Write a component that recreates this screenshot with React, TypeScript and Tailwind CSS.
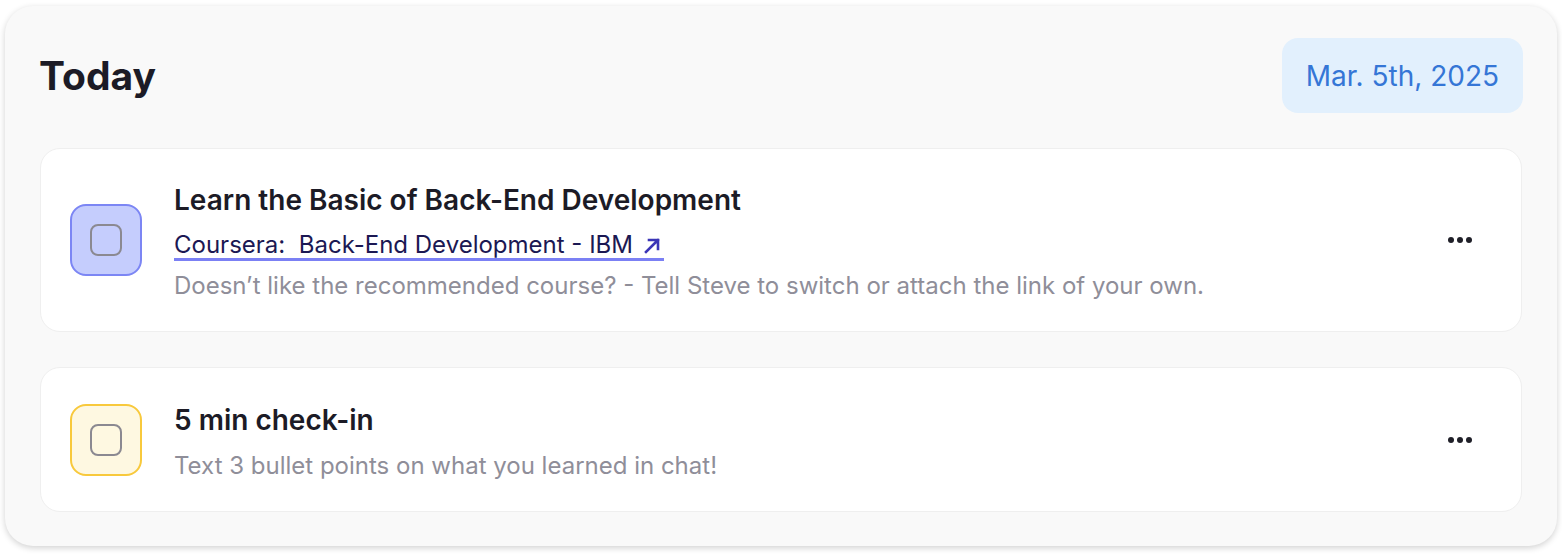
type Task = {
  title: string;
  link?: string;
  note: string;
  tone: "indigo" | "amber";
};

const tasks: Task[] = [
  {
    title: "Learn the Basic of Back-End Development",
    link: "Coursera:\u00a0 Back-End Development - IBM",
    note: "Doesn\u2019t like the recommended course? - Tell Steve to switch or attach the link of your own.",
    tone: "indigo",
  },
  {
    title: "5 min check-in",
    note: "Text 3 bullet points on what you learned in chat!",
    tone: "amber",
  },
];

function Dots() {
  return (
    <svg width="26" height="8" viewBox="0 0 26 8" className="shrink-0">
      <circle cx="4" cy="4" r="3" fill="#1f1f28" />
      <circle cx="13" cy="4" r="3" fill="#1f1f28" />
      <circle cx="22" cy="4" r="3" fill="#1f1f28" />
    </svg>
  );
}

function LinkArrow() {
  return (
    <svg width="17" height="17" viewBox="0 0 17 17" fill="none" className="shrink-0">
      <path d="M2 15 L14 3 M5 3 H14 V12" stroke="#3b35b6" strokeWidth="2.6" strokeLinecap="square" />
    </svg>
  );
}

function TaskCard({ task }: { task: Task }) {
  const box =
    task.tone === "indigo"
      ? "bg-[#c5cdfd] border-[#7c86f4]"
      : "bg-[#fef8e1] border-[#f8c93c]";

  return (
    <div className="flex items-center rounded-[20px] border border-[#efefef] bg-white px-[29px]">
      <div className={`flex h-[72px] w-[72px] shrink-0 items-center justify-center rounded-[16px] border-2 ${box}`}>
        <div className="h-[32px] w-[32px] rounded-[8px] border-2 border-[#8b8991]" />
      </div>
      <div className={`ml-[32px] flex flex-1 flex-col ${task.link ? "pb-[30px] pt-[35px]" : "pb-[30px] pt-[36px]"}`}>
        <div className="text-[28px] font-semibold leading-[32px] text-[#1c1b26]">{task.title}</div>
        {task.link && (
          <a className="mt-[16px] flex w-fit items-center gap-[11px] border-b-[3px] border-[#7b80f4] pr-[3px] text-[24px] leading-[26px] text-[#1b1853]">
            {task.link}
            <LinkArrow />
          </a>
        )}
        <div className={`${task.link ? "mt-[10px]" : "mt-[15px]"} text-[24px] leading-[30px] text-[#8f8e99]`}>{task.note}</div>
      </div>
      <div className="mr-[19px]">
        <Dots />
      </div>
    </div>
  );
}

export default function App() {
  return (
    <div className="min-h-screen bg-white p-[5px] pt-[6px] font-['Inter',sans-serif]">
      <div className="rounded-[28px] bg-[#f9f9f9] px-[34px] pb-[34px] pt-[32px] shadow-[0_2px_6px_rgba(0,0,0,0.18)]">
        <div className="flex items-center justify-between">
          <h1 className="text-[39px] font-bold leading-[44px] text-[#1c1b26]">Today</h1>
          <div className="flex h-[75px] items-center rounded-[16px] bg-[#e2f0fd] px-[24px] text-[28px] text-[#3576d6]">
            Mar. 5th, 2025
          </div>
        </div>
        <div className="mt-[35px] flex flex-col gap-[35px] px-[1px]">
          {tasks.map((t) => (
            <TaskCard key={t.title} task={t} />
          ))}
        </div>
      </div>
    </div>
  );
}
